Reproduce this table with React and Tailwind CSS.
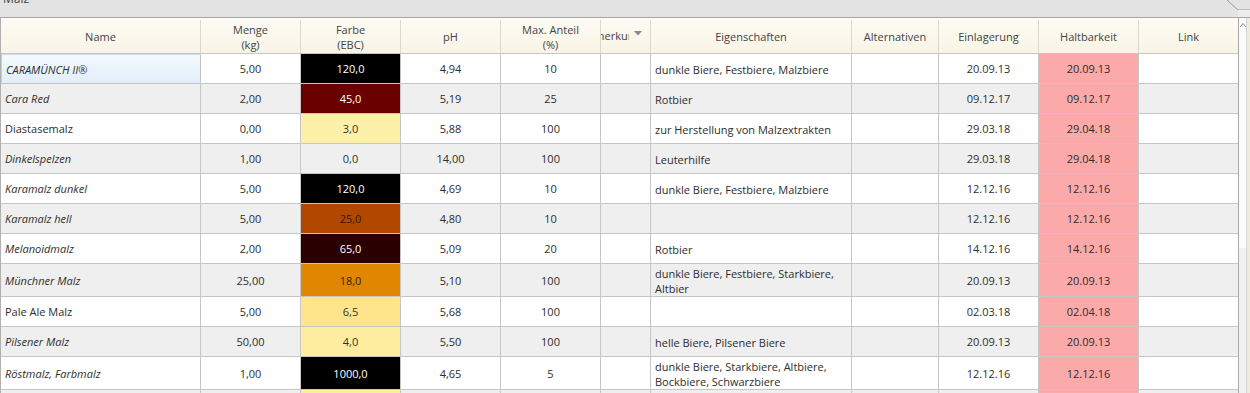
import React from 'react';

const cols = [
  { key: 'name', label: 'Name', w: 'w-[200px]' },
  { key: 'menge', label: 'Menge', sub: '(kg)', w: 'w-[100px]' },
  { key: 'farbe', label: 'Farbe', sub: '(EBC)', w: 'w-[100px]' },
  { key: 'ph', label: 'pH', w: 'w-[100px]' },
  { key: 'max', label: 'Max. Anteil', sub: '(%)', w: 'w-[100px]' },
  { key: 'bem', label: 'Bemerkung', w: 'w-[50px]' },
  { key: 'eig', label: 'Eigenschaften', w: 'w-[201px]' },
  { key: 'alt', label: 'Alternativen', w: 'w-[87px]' },
  { key: 'einl', label: 'Einlagerung', w: 'w-[100px]' },
  { key: 'halt', label: 'Haltbarkeit', w: 'w-[100px]' },
  { key: 'link', label: 'Link', w: 'w-[100px]' },
];

// farbe: [bg, text]
const colorMap = {
  black: ['bg-black', 'text-white'],
  red: ['bg-[#6b0000]', 'text-white'],
  pale: ['bg-[#fdf1a9]', 'text-[#333]'],
  none: ['', 'text-[#333]'],
  amber: ['bg-[#b24800]', 'text-[#3b1400]'],
  darkred: ['bg-[#2b0000]', 'text-white'],
  orange: ['bg-[#e08600]', 'text-[#3b2200]'],
  yellow: ['bg-[#fee48b]', 'text-[#333]'],
  lightyellow: ['bg-[#feec9f]', 'text-[#333]'],
};

const rows = [
  { name: 'CARAMÜNCH II®', italic: true, menge: '5,00', farbe: '120,0', fc: 'black', ph: '4,94', max: '10', eig: 'dunkle Biere, Festbiere, Malzbiere', einl: '20.09.13', halt: '20.09.13', selected: true },
  { name: 'Cara Red', italic: true, menge: '2,00', farbe: '45,0', fc: 'red', ph: '5,19', max: '25', eig: 'Rotbier', einl: '09.12.17', halt: '09.12.17' },
  { name: 'Diastasemalz', menge: '0,00', farbe: '3,0', fc: 'pale', ph: '5,88', max: '100', eig: 'zur Herstellung von Malzextrakten', einl: '29.03.18', halt: '29.04.18' },
  { name: 'Dinkelspelzen', italic: true, menge: '1,00', farbe: '0,0', fc: 'none', ph: '14,00', max: '100', eig: 'Leuterhilfe', einl: '29.03.18', halt: '29.04.18' },
  { name: 'Karamalz dunkel', italic: true, menge: '5,00', farbe: '120,0', fc: 'black', ph: '4,69', max: '10', eig: 'dunkle Biere, Festbiere, Malzbiere', einl: '12.12.16', halt: '12.12.16' },
  { name: 'Karamalz hell', italic: true, menge: '5,00', farbe: '25,0', fc: 'amber', ph: '4,80', max: '10', eig: '', einl: '12.12.16', halt: '12.12.16' },
  { name: 'Melanoidmalz', italic: true, menge: '2,00', farbe: '65,0', fc: 'darkred', ph: '5,09', max: '20', eig: 'Rotbier', einl: '14.12.16', halt: '14.12.16' },
  { name: 'Münchner Malz', italic: true, menge: '25,00', farbe: '18,0', fc: 'orange', ph: '5,10', max: '100', eig: 'dunkle Biere, Festbiere, Starkbiere, Altbier', einl: '20.09.13', halt: '20.09.13', tall: true },
  { name: 'Pale Ale Malz', menge: '5,00', farbe: '6,5', fc: 'yellow', ph: '5,68', max: '100', eig: '', einl: '02.03.18', halt: '02.04.18' },
  { name: 'Pilsener Malz', italic: true, menge: '50,00', farbe: '4,0', fc: 'lightyellow', ph: '5,50', max: '100', eig: 'helle Biere, Pilsener Biere', einl: '20.09.13', halt: '20.09.13' },
  { name: 'Röstmalz, Farbmalz', italic: true, menge: '1,00', farbe: '1000,0', fc: 'black', ph: '4,65', max: '5', eig: 'dunkle Biere, Starkbiere, Altbiere, Bockbiere, Schwarzbiere', einl: '12.12.16', halt: '12.12.16', tall: true },
  { name: 'Weizenmalz', menge: '10,00', farbe: '4,0', fc: 'lightyellow', ph: '5,60', max: '70', eig: 'Weizenbiere', einl: '20.09.13', halt: '20.09.13' },
];

function HeaderCell({ col }) {
  if (col.key === 'bem') {
    return (
      <div className={`${col.w} shrink-0 h-full border-r border-[#dcd8cc] flex items-center`}>
        <div className="w-[28px] overflow-hidden whitespace-nowrap">
          <span className="inline-block ml-[-20px]">Bemerkung</span>
        </div>
        <svg width="8" height="5" viewBox="0 0 8 5" className="ml-[5px] mt-[-7px]">
          <path d="M0 0 L8 0 L4 4.5 Z" fill="#8a8a8a" />
        </svg>
      </div>
    );
  }
  return (
    <div className={`${col.w} shrink-0 h-full border-r border-[#dcd8cc] flex flex-col items-center justify-center leading-[15px] text-center`}>
      <span>{col.label}</span>
      {col.sub && <span>{col.sub}</span>}
    </div>
  );
}

function Row({ row, index }) {
  const even = index % 2 === 1;
  const rowBg = even ? 'bg-[#efefef]' : 'bg-white';
  const [fBg, fText] = colorMap[row.fc];
  const cell = 'shrink-0 h-full border-r border-b border-[#c6c6c6] flex items-center pt-[2px]';
  return (
    <div className={`flex ${row.tall ? 'h-[33px]' : 'h-[30px]'} ${rowBg}`}>
      <div
        className={`w-[200px] ${cell} pl-[4px] ${row.italic ? 'italic' : ''} ${
          row.selected ? 'bg-gradient-to-b from-[#f4f9fe] to-[#e1eefa] border-l border-t border-l-[#b8d3ee] border-t-[#c9def3]' : ''
        }`}
      >
        {row.name}
      </div>
      <div className={`w-[100px] ${cell} justify-center`}>{row.menge}</div>
      <div className={`w-[100px] ${cell} justify-center ${fBg} ${fText}`}>{row.farbe}</div>
      <div className={`w-[100px] ${cell} justify-center`}>{row.ph}</div>
      <div className={`w-[100px] ${cell} justify-center`}>{row.max}</div>
      <div className={`w-[50px] ${cell}`} />
      <div className={`w-[201px] ${cell} pl-[4px] pr-[6px] leading-[15px]`}>{row.eig}</div>
      <div className={`w-[87px] ${cell}`} />
      <div className={`w-[100px] ${cell} justify-center`}>{row.einl}</div>
      <div className={`w-[100px] ${cell} justify-center bg-[#fba9a9]`}>{row.halt}</div>
      <div className={`w-[100px] ${cell}`} />
    </div>
  );
}

export default function App() {
  return (
    <div
      className="w-[1250px] h-[393px] overflow-hidden bg-[#e3e3e3] text-[11px] text-[#2e2e2e]"
      style={{ fontFamily: '"Open Sans", "Noto Sans", sans-serif' }}
    >
      {/* dock title bar, scrolled so only the bottom of the title shows */}
      <div className="h-[18px] flex items-start justify-between border-b border-[#a8a8a8] overflow-hidden">
        <span className="pl-[3px] mt-[-8px] leading-[14px] text-[12px] text-[#444]">Malz</span>
        <svg width="30" height="18" viewBox="0 0 30 18" className="shrink-0">
          <path d="M7 0 L18 10 L30 10" fill="none" stroke="#9a9a9a" strokeWidth="1" />
          <path d="M18 10 L30 10 L30 18 L18 18 Z" fill="#ececec" />
        </svg>
      </div>

      <div className="flex">
        <div className="w-[1238px] shrink-0 border-l border-[#b0b0b0] bg-white">
          <div className="flex h-[36px] bg-gradient-to-b from-[#fdfbf4] to-[#f8f4e6] border-b border-[#c6c6c6] text-[#444] pt-[2px]">
            {cols.map((c) => (
              <HeaderCell key={c.key} col={c} />
            ))}
          </div>
          {rows.map((r, i) => (
            <Row key={r.name} row={r} index={i} />
          ))}
        </div>

        {/* vertical scrollbar strip */}
        <div className="w-[12px] shrink-0 flex border-l border-[#a8a8a8] bg-[#f0f0f0]">
          <div className="w-[7px] flex flex-col">
            <div className="h-[230px] bg-[#fbfbfb] flex justify-center pt-[5px]">
              <svg width="6" height="4" viewBox="0 0 6 4">
                <path d="M0 4 L3 0.5 L6 4" fill="none" stroke="#8c8c8c" strokeWidth="1" />
              </svg>
            </div>
            <div className="flex-1 bg-[#f2f2f2]" />
          </div>
          <div className="w-[4px] border-l border-[#d4d4d4] bg-[#efece0]" />
        </div>
      </div>
    </div>
  );
}
